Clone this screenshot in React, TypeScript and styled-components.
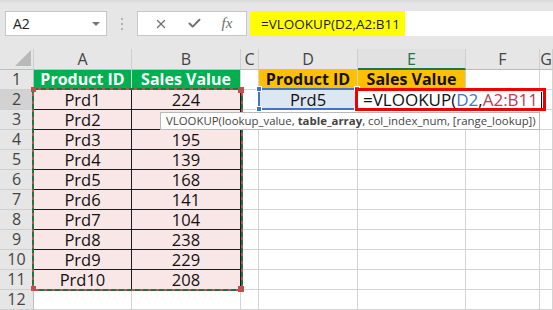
import React from "react";
import styled, { createGlobalStyle, css } from "styled-components";
import { X, Check } from "lucide-react";

const GlobalStyle = createGlobalStyle`
  html, body { margin: 0; padding: 0; background: #ffffff; overflow: hidden; }
  body { font-family: "Open Sans", "Liberation Sans", sans-serif; }
  * { box-sizing: border-box; }
`;

const Window = styled.div`
  width: 553px;
  height: 310px;
  display: flex;
  flex-direction: column;
  background: #fff;
  overflow: hidden;
`;

const Toolbar = styled.div`
  height: 49px;
  flex: none;
  display: flex;
  align-items: flex-start;
  padding: 11px 0 0 5px;
  background: linear-gradient(#d9d9d9 0px, #e6e6e6 4px, #e6e6e6 100%);
`;

const NameBox = styled.div`
  width: 102px;
  height: 25px;
  background: #fff;
  border: 1px solid #c6c6c6;
  display: flex;
  align-items: center;
  justify-content: space-between;
  padding: 0 6px 0 7px;
  font-size: 14px;
  color: #222;
`;

const Caret = styled.span`
  width: 0;
  height: 0;
  border-left: 4px solid transparent;
  border-right: 4px solid transparent;
  border-top: 4px solid #777;
`;

const Grip = styled.div`
  width: 30px;
  height: 25px;
  display: flex;
  flex-direction: column;
  align-items: center;
  justify-content: center;
  gap: 3px;
`;

const GripDot = styled.span`
  width: 2px;
  height: 2px;
  background: #b0b0b0;
`;

const FxBox = styled.div`
  width: 110px;
  height: 25px;
  background: #fff;
  border: 1px solid #c6c6c6;
  display: flex;
  align-items: center;
  justify-content: space-around;
  padding: 0 4px 0 6px;
  color: #6d6d6d;
`;

const FxText = styled.span`
  font-family: "Liberation Serif", "DejaVu Serif", serif;
  font-style: italic;
  font-size: 15px;
  color: #6d6d6d;
`;

const FormulaInput = styled.div`
  flex: 1;
  margin-left: 3px;
  height: 25px;
  background: #fff;
  display: flex;
  align-items: stretch;
`;

const FormulaText = styled.div`
  background: #ffff00;
  width: 155px;
  display: flex;
  align-items: center;
  padding-left: 11px;
  font-size: 13.5px;
  color: #222;
  white-space: nowrap;
`;

const Sheet = styled.div`
  position: relative;
  flex: 1;
  display: grid;
  grid-template-columns: 34px 98px 109px 18px 99px 108px 74px 1fr;
  grid-template-rows: 21px repeat(12, 20px);
`;

type CellProps = {
  $fill?: string;
  $color?: string;
  $bold?: boolean;
  $dark?: boolean;
};

const Cell = styled.div<CellProps>`
  border-right: 1px solid ${(p) => (p.$dark ? "#1a1a1a" : "#d4d4d4")};
  border-bottom: 1px solid ${(p) => (p.$dark ? "#1a1a1a" : "#d4d4d4")};
  background: ${(p) => p.$fill || "#fff"};
  color: ${(p) => p.$color || "#111"};
  font-weight: ${(p) => (p.$bold ? 700 : 400)};
  font-size: ${(p) => (p.$bold ? "16px" : "16.5px")};
  line-height: 19px;
  text-align: center;
  white-space: nowrap;
`;

const ColHead = styled.div<{ $active?: boolean }>`
  background: #e6e6e6;
  border-right: 1px solid #cfcfcf;
  border-bottom: 1px solid #bdbdbd;
  font-size: 16px;
  line-height: 20px;
  text-align: center;
  color: #444;
  ${(p) =>
    p.$active &&
    css`
      color: #217346;
      border-bottom: 2px solid #217346;
      background: #e1e1e1;
    `}
`;

const Corner = styled.div`
  background: #e6e6e6;
  border-right: 1px solid #cfcfcf;
  border-bottom: 1px solid #bdbdbd;
  display: flex;
  align-items: flex-end;
  justify-content: flex-end;
  padding: 0 2px 3px 0;
`;

const CornerTri = styled.span`
  width: 0;
  height: 0;
  border-left: 16px solid transparent;
  border-bottom: 16px solid #b9b9b9;
`;

const RowHead = styled.div<{ $active?: boolean }>`
  background: ${(p) => (p.$active ? "#d2d2d2" : "#e6e6e6")};
  border-right: 1px solid #bdbdbd;
  border-bottom: 1px solid #cfcfcf;
  font-size: 16px;
  line-height: 19px;
  text-align: center;
  color: #444;
`;

const Marquee = styled.svg`
  position: absolute;
  left: 32px;
  top: 39px;
  width: 211px;
  height: 203px;
  overflow: visible;
`;

const Selection = styled.div`
  position: absolute;
  left: 258px;
  top: 39px;
  width: 100px;
  height: 22px;
  border: 2px solid #4472c4;
`;

const Handle = styled.span<{ $x: "l" | "r"; $y: "t" | "b"; $color: string }>`
  position: absolute;
  width: 6px;
  height: 6px;
  background: ${(p) => p.$color};
  border: 1px solid #fff;
  ${(p) => (p.$x === "l" ? "left: -4px;" : "right: -4px;")}
  ${(p) => (p.$y === "t" ? "top: -4px;" : "bottom: -4px;")}
`;

const Editor = styled.div`
  position: absolute;
  left: 355px;
  top: 39px;
  width: 191px;
  height: 23px;
  border: 3px solid #ee0000;
  background: #fff;
  display: flex;
  align-items: center;
  padding-left: 5px;
  font-size: 17px;
  line-height: 17px;
  color: #111;
  white-space: nowrap;
`;

const Ref = styled.span<{ $c: string }>`
  color: ${(p) => p.$c};
`;

const CursorBar = styled.span`
  display: inline-block;
  width: 1px;
  height: 16px;
  background: #111;
  margin-left: 3px;
`;

const Tooltip = styled.div`
  position: absolute;
  left: 160px;
  top: 63px;
  width: 380px;
  height: 18px;
  background: #fff;
  border: 1px solid #b9b9b9;
  padding-left: 5px;
  font-size: 11.4px;
  line-height: 15px;
  color: #444;
  white-space: nowrap;
`;

const cols = ["A", "B", "C", "D", "E", "F", "G"];
const data: [string, string][] = [
  ["Prd1", "224"],
  ["Prd2", ""],
  ["Prd3", "195"],
  ["Prd4", "139"],
  ["Prd5", "168"],
  ["Prd6", "141"],
  ["Prd7", "104"],
  ["Prd8", "238"],
  ["Prd9", "229"],
  ["Prd10", "208"],
];

const PINK = "#f9e6e6";
const GREEN = "#00b050";
const ORANGE = "#ffc000";

function renderRow(r: number) {
  const cells: React.ReactNode[] = [];
  cells.push(
    <RowHead key="h" $active={r === 2}>
      {r}
    </RowHead>
  );
  for (let c = 0; c < cols.length; c++) {
    const key = `${r}-${c}`;
    if (r === 1 && (c === 0 || c === 1)) {
      cells.push(
        <Cell key={key} $fill={GREEN} $color="#fff" $bold>
          {c === 0 ? "Product ID" : "Sales Value"}
        </Cell>
      );
    } else if (r === 1 && (c === 3 || c === 4)) {
      cells.push(
        <Cell key={key} $fill={ORANGE} $color="#111" $bold>
          {c === 3 ? "Product ID" : "Sales Value"}
        </Cell>
      );
    } else if (r >= 2 && r <= 11 && (c === 0 || c === 1)) {
      cells.push(
        <Cell key={key} $fill={PINK} $dark>
          {data[r - 2][c]}
        </Cell>
      );
    } else if (r === 2 && c === 3) {
      cells.push(
        <Cell key={key} $fill="#dde6f2">
          Prd5
        </Cell>
      );
    } else {
      cells.push(<Cell key={key} />);
    }
  }
  return cells;
}

export default function App() {
  const rows = Array.from({ length: 12 }, (_, i) => i + 1);
  return (
    <>
      <GlobalStyle />
      <Window>
        <Toolbar>
          <NameBox>
            <span>A2</span>
            <Caret />
          </NameBox>
          <Grip>
            <GripDot />
            <GripDot />
            <GripDot />
          </Grip>
          <FxBox>
            <X size={14} strokeWidth={2.2} />
            <Check size={15} strokeWidth={3} />
            <FxText>fx</FxText>
          </FxBox>
          <FormulaInput>
            <FormulaText>=VLOOKUP(D2,A2:B11</FormulaText>
          </FormulaInput>
        </Toolbar>
        <Sheet>
          <Corner>
            <CornerTri />
          </Corner>
          {cols.map((c) => (
            <ColHead key={c} $active={c === "E"}>
              {c}
            </ColHead>
          ))}
          {rows.map((r) => renderRow(r))}

          <Marquee viewBox="0 0 211 203">
            <rect x="1" y="1" width="209" height="201" fill="none" stroke="#c0504d" strokeWidth="2" />
            <rect x="1" y="1" width="209" height="201" fill="none" stroke="#217346" strokeWidth="2" strokeDasharray="5 3" />
            <rect x="-1" y="-1" width="5" height="5" fill="#c0504d" />
            <rect x="206" y="-1" width="6" height="6" fill="#c0504d" />
            <rect x="-1" y="198" width="5" height="5" fill="#c0504d" />
            <rect x="206" y="198" width="6" height="6" fill="#c0504d" />
          </Marquee>

          <Selection>
            <Handle $x="l" $y="t" $color="#4472c4" />
            <Handle $x="r" $y="t" $color="#4472c4" />
            <Handle $x="l" $y="b" $color="#4472c4" />
            <Handle $x="r" $y="b" $color="#4472c4" />
          </Selection>

          <Editor>
            <span>=VLOOKUP(</span>
            <Ref $c="#3e78c8">D2</Ref>
            <span>,</span>
            <Ref $c="#c23a52">A2:B11</Ref>
            <CursorBar />
          </Editor>

          <Tooltip>
            VLOOKUP(lookup_value, <b>table_array</b>, col_index_num, [range_lookup])
          </Tooltip>
        </Sheet>
      </Window>
    </>
  );
}
